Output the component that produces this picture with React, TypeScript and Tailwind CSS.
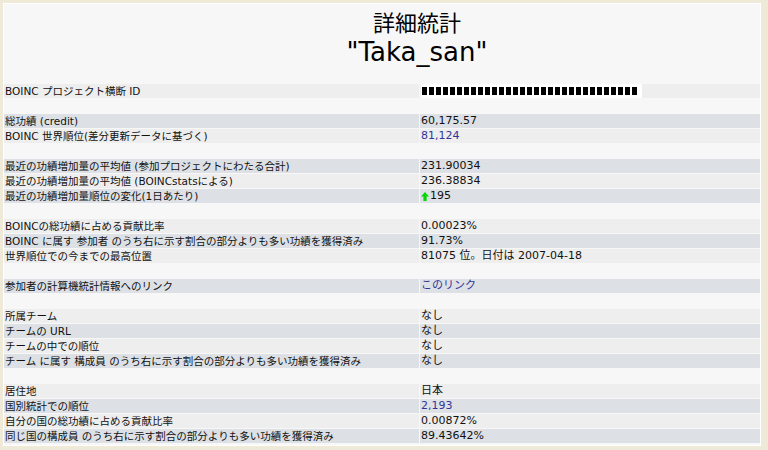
import React from "react";

type Row =
  | { blank: true }
  | { label: string; value: React.ReactNode; link?: boolean };

const font = { fontFamily: '"DejaVu Sans", "Noto Sans CJK JP", sans-serif' };

function IdBlocks() {
  const blocks = Array.from({ length: 31 });
  return (
    <span className="inline-flex h-[14px] w-[221px] items-center gap-[2px] bg-white pl-px">
      {blocks.map((_, i) => (
        <span key={i} className="block h-[8px] w-[5px] bg-black" />
      ))}
    </span>
  );
}

function UpArrow() {
  return (
    <svg width="8" height="9" viewBox="0 0 8 9" className="mr-px inline-block">
      <path d="M4 0 L8 4.5 L5.6 4.5 L5.6 9 L2.4 9 L2.4 4.5 L0 4.5 Z" fill="#00d800" />
    </svg>
  );
}

const rows: Row[] = [
  { label: "BOINC プロジェクト横断 ID", value: <IdBlocks /> },
  { blank: true },
  { label: "総功績 (credit)", value: "60,175.57" },
  { label: "BOINC 世界順位(差分更新データに基づく)", value: "81,124", link: true },
  { blank: true },
  { label: "最近の功績増加量の平均値 (参加プロジェクトにわたる合計)", value: "231.90034" },
  { label: "最近の功績増加量の平均値 (BOINCstatsによる)", value: "236.38834" },
  {
    label: "最近の功績増加量順位の変化(1日あたり)",
    value: (
      <span className="inline-flex items-center">
        <UpArrow />
        195
      </span>
    ),
  },
  { blank: true },
  { label: "BOINCの総功績に占める貢献比率", value: "0.00023%" },
  { label: "BOINC に属す 参加者 のうち右に示す割合の部分よりも多い功績を獲得済み", value: "91.73%" },
  { label: "世界順位での今までの最高位置", value: "81075 位。日付は 2007-04-18" },
  { blank: true },
  { label: "参加者の計算機統計情報へのリンク", value: "このリンク", link: true },
  { blank: true },
  { label: "所属チーム", value: "なし" },
  { label: "チームの URL", value: "なし" },
  { label: "チームの中での順位", value: "なし" },
  { label: "チーム に属す 構成員 のうち右に示す割合の部分よりも多い功績を獲得済み", value: "なし" },
  { blank: true },
  { label: "居住地", value: "日本" },
  { label: "国別統計での順位", value: "2,193", link: true },
  { label: "自分の国の総功績に占める貢献比率", value: "0.00872%" },
  { label: "同じ国の構成員 のうち右に示す割合の部分よりも多い功績を獲得済み", value: "89.43642%" },
];

export default function App() {
  let idx = 0;
  return (
    <div className="h-[450px] w-[768px] overflow-hidden bg-[#efe9d7] pl-[3px] pt-[3px]" style={font}>
      <div className="flex h-[443px] w-[758px] flex-col border border-white bg-[#f7f7f7]">
        <div className="flex h-[80px] flex-col items-center pl-[70px] pt-[5px] text-black">
          <div className="text-[22px] leading-[29px]">詳細統計</div>
          <div className="text-[26px] leading-[29px]">"Taka_san"</div>
        </div>
        <div className="flex flex-col gap-px leading-[14px] text-[#111]">
          {rows.map((r, i) => {
            if ("blank" in r) {
              return <div key={i} className="h-[14px]" />;
            }
            const dark = idx % 2 === 1;
            idx++;
            const bg = dark ? "bg-[#dde1e6]" : "bg-[#eeeeee]";
            return (
              <div key={i} className="flex h-[14px] gap-px">
                <div className={`w-[415px] whitespace-nowrap pl-px text-[10.5px] ${bg}`}>{r.label}</div>
                <div
                  className={`flex-1 whitespace-nowrap pl-px text-[11px] ${bg} ${r.link ? "text-[#333399]" : ""}`}
                >
                  {r.value}
                </div>
              </div>
            );
          })}
        </div>
      </div>
    </div>
  );
}
